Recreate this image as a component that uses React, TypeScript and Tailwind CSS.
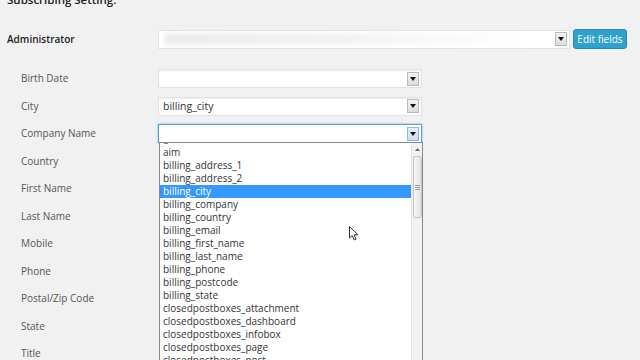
import React from "react";

const labels = [
  "Birth Date",
  "City",
  "Company Name",
  "Country",
  "First Name",
  "Last Name",
  "Mobile",
  "Phone",
  "Postal/Zip Code",
  "State",
  "Title",
];

const items = [
  "aim",
  "billing_address_1",
  "billing_address_2",
  "billing_city",
  "billing_company",
  "billing_country",
  "billing_email",
  "billing_first_name",
  "billing_last_name",
  "billing_phone",
  "billing_postcode",
  "billing_state",
  "closedpostboxes_attachment",
  "closedpostboxes_dashboard",
  "closedpostboxes_infobox",
  "closedpostboxes_page",
  "closedpostboxes_post",
];

function Arrow({ focus }: { focus?: boolean }) {
  return (
    <div
      className={
        "flex h-[14px] w-[12px] items-center justify-center border " +
        (focus
          ? "border-[#8fb8df] bg-gradient-to-b from-[#e4effa] to-[#c9dcf0]"
          : "border-[#b9b9b9] bg-gradient-to-b from-[#f4f4f4] to-[#dcdcdc]")
      }
    >
      <svg width="6" height="4" viewBox="0 0 6 4">
        <path d="M0 0 L6 0 L3 4 Z" fill="#111" />
      </svg>
    </div>
  );
}

function Select({ value, focus }: { value?: string; focus?: boolean }) {
  return (
    <div
      className={
        "flex h-[19px] w-[264px] items-center justify-between bg-white pl-[4px] pr-[2px] border " +
        (focus
          ? "border-[#5b9dd9] shadow-[0_0_2px_rgba(30,140,190,0.6)]"
          : "border-[#e2e2e2] shadow-[inset_0_1px_2px_rgba(0,0,0,0.07)]")
      }
    >
      <span className="text-[10.5px] leading-[13px] text-[#333]">{value ?? ""}</span>
      <Arrow focus={focus} />
    </div>
  );
}

export default function App() {
  return (
    <div
      className="relative h-[360px] w-[640px] overflow-hidden bg-[#f1f1f1] text-[#444]"
      style={{ fontFamily: '"Open Sans", "Noto Sans", sans-serif' }}
    >
      <h2 className="mt-[-10px] pl-[7px] text-[11.5px] font-semibold leading-[20px] text-[#222]">
        Subscribing Setting:
      </h2>

      <div className="mt-[15px] flex h-[28px] items-center">
        <div className="w-[158px] pl-[7px] text-[10px] font-semibold text-[#222]">
          Administrator
        </div>
        <div className="flex h-[19px] w-[412px] items-center justify-between border border-[#e2e2e2] bg-white pl-[6px] pr-[2px]">
          <div className="h-[12px] w-[360px] bg-gradient-to-r from-[#ececec] via-[#f3f3f3] to-white blur-[2px]" />
          <Arrow />
        </div>
        <button className="ml-[3px] h-[20px] w-[54px] rounded-[3px] border border-[#1f8dbb] bg-[#2ea2cc] text-[10px] leading-[18px] text-white">
          Edit fields
        </button>
      </div>

      <div className="mt-[12px] flex flex-col">
        {labels.map((l, i) => (
          <div key={l} className="flex h-[27.5px] items-center">
            <div className="w-[158px] pl-[21px] text-[10px] text-[#555]">{l}</div>
            {i === 0 && <Select />}
            {i === 1 && <Select value="billing_city" />}
            {i === 2 && <Select focus />}
          </div>
        ))}
      </div>

      {/* open dropdown list */}
      <div className="absolute left-[159px] top-[142px] h-[230px] w-[264px] overflow-hidden border border-[#8a8a8a] bg-white">
        <div className="flex">
          <div className="flex-1">
            <div className="h-[3px] pl-[4px]">
              <div className="h-px w-[4px] bg-[#888]" />
            </div>
            {items.map((it) => (
              <div
                key={it}
                className={
                  "h-[13px] pl-[3px] text-[10px] leading-[13px] " +
                  (it === "billing_city" ? "bg-[#3399ff] text-white" : "text-[#333]")
                }
              >
                {it}
              </div>
            ))}
          </div>
          <div className="flex h-[230px] w-[11px] flex-col items-center border-l border-[#e4e4e4] bg-[#f2f2f2]">
            <svg className="mt-[5px]" width="5" height="3" viewBox="0 0 5 3">
              <path d="M0 3 L5 3 L2.5 0 Z" fill="#666" />
            </svg>
            <div className="mt-[5px] flex h-[62px] w-[9px] flex-col items-center justify-center gap-[1px] rounded-[2px] border border-[#c4c4c4] bg-gradient-to-r from-[#f8f8f8] to-[#e2e2e2]">
              <div className="h-px w-[5px] bg-[#999]" />
              <div className="h-px w-[5px] bg-[#999]" />
              <div className="h-px w-[5px] bg-[#999]" />
            </div>
          </div>
        </div>
      </div>

      {/* mouse cursor */}
      <svg
        className="absolute left-[349px] top-[226px]"
        width="10"
        height="15"
        viewBox="0 0 10 15"
      >
        <path
          d="M0.5 0.5 L0.5 12 L3.2 9.5 L5.2 14 L7 13.2 L5 8.8 L9 8.8 Z"
          fill="white"
          stroke="#333"
          strokeWidth="1"
          strokeLinejoin="round"
        />
      </svg>
    </div>
  );
}
